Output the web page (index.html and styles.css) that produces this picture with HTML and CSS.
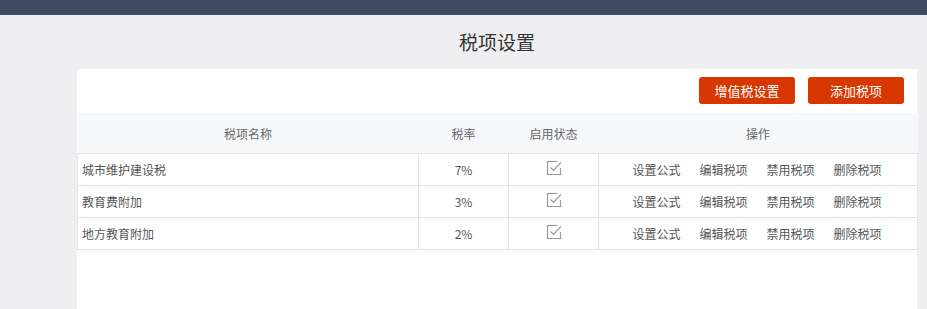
FILE: index.html
```html
<!DOCTYPE html>
<html lang="zh">
<head>
<meta charset="utf-8">
<title>税项设置</title>
<link rel="stylesheet" href="styles.css">
</head>
<body>
<div class="topbar"></div>
<div class="main">
  <h1 class="title">税项设置</h1>
  <div class="card">
    <div class="toolbar">
      <button class="btn">增值税设置</button>
      <button class="btn">添加税项</button>
    </div>
    <table class="tax-table">
      <colgroup>
        <col class="c-name"><col class="c-rate"><col class="c-status"><col class="c-ops">
      </colgroup>
      <thead>
        <tr><th>税项名称</th><th>税率</th><th>启用状态</th><th>操作</th></tr>
      </thead>
      <tbody>
        <tr>
          <td class="name">城市维护建设税</td><td>7%</td>
          <td><svg class="check" viewBox="0 0 16 16"><path d="M11.5 1.5H1.5V14.5H14.5V8"/><path d="M4.5 7.5L7.5 10.5L15 2.5"/></svg></td>
          <td class="ops"><a>设置公式</a><a>编辑税项</a><a>禁用税项</a><a>删除税项</a></td>
        </tr>
        <tr>
          <td class="name">教育费附加</td><td>3%</td>
          <td><svg class="check" viewBox="0 0 16 16"><path d="M11.5 1.5H1.5V14.5H14.5V8"/><path d="M4.5 7.5L7.5 10.5L15 2.5"/></svg></td>
          <td class="ops"><a>设置公式</a><a>编辑税项</a><a>禁用税项</a><a>删除税项</a></td>
        </tr>
        <tr>
          <td class="name">地方教育附加</td><td>2%</td>
          <td><svg class="check" viewBox="0 0 16 16"><path d="M11.5 1.5H1.5V14.5H14.5V8"/><path d="M4.5 7.5L7.5 10.5L15 2.5"/></svg></td>
          <td class="ops"><a>设置公式</a><a>编辑税项</a><a>禁用税项</a><a>删除税项</a></td>
        </tr>
      </tbody>
    </table>
  </div>
</div>
</body>
</html>
```
FILE: styles.css
```css
html, body {
  margin: 0;
  padding: 0;
}
body {
  background: #efeff1;
  font-family: "Noto Sans CJK SC", "Noto Sans", sans-serif;
  color: #555;
  height: 309px;
  overflow: hidden;
}
.topbar {
  height: 15px;
  background: #3c4a62;
}
.main {
  padding: 0 10px 0 77px;
}
.title {
  margin: 0;
  height: 54px;
  line-height: 54px;
  font-size: 19px;
  font-weight: normal;
  color: #333;
  text-align: center;
}
.card {
  background: #fff;
  height: 240px;
}
.toolbar {
  display: flex;
  justify-content: flex-end;
  gap: 13px;
  padding: 8px 13px 9px;
}
.btn {
  width: 96px;
  height: 27px;
  border: none;
  border-radius: 3px;
  background: #d73700;
  color: #fff;
  font-family: inherit;
  font-size: 13px;
  padding: 0;
  line-height: 27px;
}
.tax-table {
  width: 840px;
  border-collapse: collapse;
  table-layout: fixed;
  font-size: 12px;
}
.c-name { width: 341px; }
.c-rate { width: 90px; }
.c-status { width: 90px; }
.c-ops { width: 319px; }
.tax-table th {
  height: 40px;
  padding: 0;
  background: #f7f8fa;
  font-weight: normal;
  color: #666;
  border-bottom: 1px solid #e4e4e4;
}
.tax-table td {
  height: 31px;
  padding: 0;
  text-align: center;
  border: 1px solid #e4e4e4;
  color: #555;
}
.tax-table td.name {
  text-align: left;
  padding-left: 4px;
}
.tax-table td.ops {
  padding-right: 2px;
}
.check {
  width: 16px;
  height: 16px;
  display: block;
  margin: -4px auto 0;
  fill: none;
  stroke: #9a9a9a;
  stroke-width: 1.2;
}
.ops a {
  margin: 0 9.5px;
  color: #555;
  cursor: pointer;
}
```
